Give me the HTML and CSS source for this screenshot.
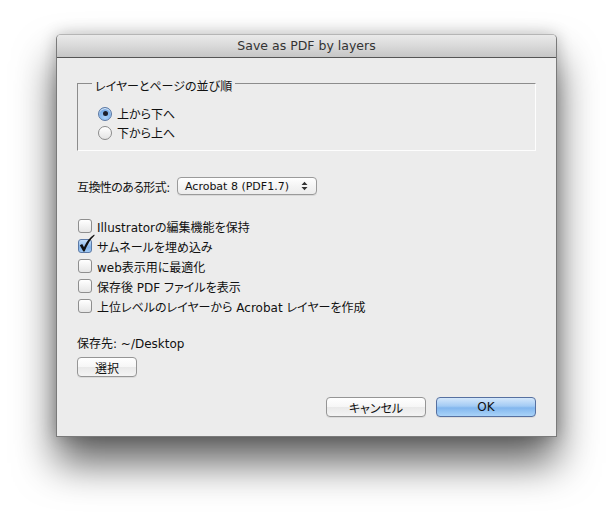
FILE: index.html
```html
<!DOCTYPE html>
<html lang="ja">
<head>
<meta charset="utf-8">
<title>Save as PDF by layers</title>
<link rel="stylesheet" href="styles.css">
</head>
<body>
<div class="stage">
  <div class="window">
    <div class="titlebar">Save as PDF by layers</div>
    <div class="content">
      <fieldset class="group">
        <legend class="group-title">レイヤーとページの並び順</legend>
        <label class="radio-row"><span class="radio on"></span>上から下へ</label>
        <label class="radio-row"><span class="radio"></span>下から上へ</label>
      </fieldset>

      <div class="popup-row">
        <span class="popup-label">互換性のある形式:</span>
        <div class="popup">
          <span class="popup-text">Acrobat 8 (PDF1.7)</span>
          <svg class="popup-arrows" width="7" height="10" viewBox="0 0 7 10"><path d="M0.5 4 L3.5 0.8 L6.5 4 Z M0.5 6 L3.5 9.2 L6.5 6 Z" fill="#333"/></svg>
        </div>
      </div>

      <div class="checks">
        <label class="check-row"><span class="check"></span>Illustratorの編集機能を保持</label>
        <label class="check-row"><span class="check on"><svg class="tick" width="17" height="19" viewBox="0 0 17 19"><path d="M1.8 11.2 L4.2 9.9 L6 13.2 Q9.5 5 16.2 0.6 L16.6 1.4 Q10.6 6.8 6.6 17.6 L5.3 17.6 Z" fill="#111"/></svg></span>サムネールを埋め込み</label>
        <label class="check-row"><span class="check"></span>web表示用に最適化</label>
        <label class="check-row"><span class="check"></span>保存後 PDF ファイルを表示</label>
        <label class="check-row"><span class="check"></span>上位レベルのレイヤーから Acrobat レイヤーを作成</label>
      </div>

      <div class="dest">保存先: ~/Desktop</div>
      <button class="btn btn-small">選択</button>

      <div class="actions">
        <button class="btn btn-wide">キャンセル</button>
        <button class="btn btn-wide btn-default">OK</button>
      </div>
    </div>
  </div>
</div>
</body>
</html>
```
FILE: styles.css
```css
* { box-sizing: border-box; }
html, body { margin: 0; padding: 0; background: #ffffff; }
body {
  font-family: "DejaVu Sans", "Noto Sans CJK JP", sans-serif;
  font-size: 12px;
  color: #111;
  font-feature-settings: "palt" 1;
}
.stage {
  min-height: 516px;
  padding: 34px 0 0 56px;
}
.window {
  width: 501px;
  background: #ececec;
  border: 1px solid #7a7a7a;
  border-top-color: #b5b5b5;
  border-radius: 5px 5px 0 0;
  box-shadow: 0 26px 40px rgba(0,0,0,0.62), 0 0 16px rgba(0,0,0,0.22);
}
.titlebar {
  height: 23px;
  line-height: 22px;
  text-align: center;
  font-size: 12.5px;
  color: #333;
  border-bottom: 1px solid #555;
  border-radius: 4px 4px 0 0;
  background: linear-gradient(#eaeaea, #d9d9d9 50%, #c6c6c6);
}
.content {
  display: flex;
  flex-direction: column;
  padding: 14px 20px 19px 20px;
}
.group {
  margin: 0;
  padding: 0 0 8px 14px;
  border: 1px solid;
  border-color: #8c8c8c #fdfdfd #fdfdfd #8c8c8c;
  min-width: 0;
}
.group-title {
  padding: 8px 3px 0 3px;
  line-height: 14px;
  font-size: 12px;
}
.radio-row {
  display: flex;
  align-items: center;
  height: 19px;
  margin-left: 6px;
  gap: 5px;
}
.radio-row:first-of-type { margin-top: 10px; }
.radio {
  width: 14px;
  height: 14px;
  border-radius: 50%;
  border: 1px solid #8a8a8a;
  background: linear-gradient(#ffffff, #e4e4e4);
  box-shadow: inset 0 1px 1px rgba(255,255,255,0.9);
  display: flex;
  align-items: center;
  justify-content: center;
}
.radio.on {
  border-color: #5a78a4;
  background: radial-gradient(circle at 50% 80%, #a9d0f7 0%, #7eb2ea 55%, #5e93d4 100%);
}
.radio.on::after {
  content: "";
  width: 5px;
  height: 5px;
  border-radius: 50%;
  background: #1c1f2a;
}
.popup-row {
  display: flex;
  align-items: center;
  margin-top: 26px;
  height: 18px;
}
.popup-label {
  flex: none;
  white-space: nowrap;
  width: 100px;
  letter-spacing: -0.6px;
}
.popup {
  flex: none;
  width: 140px;
  height: 18px;
  display: flex;
  align-items: center;
  justify-content: space-between;
  padding: 0 8px 0 7px;
  border: 1px solid #9a9a9a;
  border-radius: 4px;
  background: linear-gradient(#ffffff, #f4f4f4 50%, #ececec);
  box-shadow: 0 1px 0 rgba(0,0,0,0.08);
}
.popup-text { font-size: 11px; }
.checks {
  margin-top: 21px;
  display: flex;
  flex-direction: column;
}
.check-row {
  display: flex;
  align-items: center;
  height: 20px;
  gap: 5px;
  padding-left: 1px;
}
.check {
  position: relative;
  width: 14px;
  height: 14px;
  border: 1px solid #8e8e8e;
  border-radius: 3px;
  background: linear-gradient(#ffffff, #e6e6e6);
  flex: none;
}
.check.on {
  border-color: #5b79a6;
  background: linear-gradient(#c6def8, #83b4ea 60%, #9fc8f3);
}
.tick {
  position: absolute;
  left: -1px;
  top: -6px;
}
.dest {
  margin-top: 20px;
  height: 16px;
  line-height: 16px;
}
.btn {
  font-family: inherit;
  font-feature-settings: inherit;
  font-size: 12px;
  color: #111;
  height: 20px;
  padding: 0;
  border: 1px solid #959595;
  border-radius: 4px;
  background: linear-gradient(#ffffff, #f6f6f6 50%, #e9e9e9 51%, #f4f4f4);
  box-shadow: 0 1px 0 rgba(0,0,0,0.07);
}
.btn-small {
  width: 60px;
  margin-top: 5px;
}
.actions {
  margin-top: 20px;
  display: flex;
  justify-content: flex-end;
  gap: 10px;
}
.btn-wide { width: 100px; }
.btn-default {
  border-color: #5670a0;
  background: linear-gradient(#d4e7fb, #a3cbf4 45%, #82b6ee 55%, #a9d3f8);
}
```
